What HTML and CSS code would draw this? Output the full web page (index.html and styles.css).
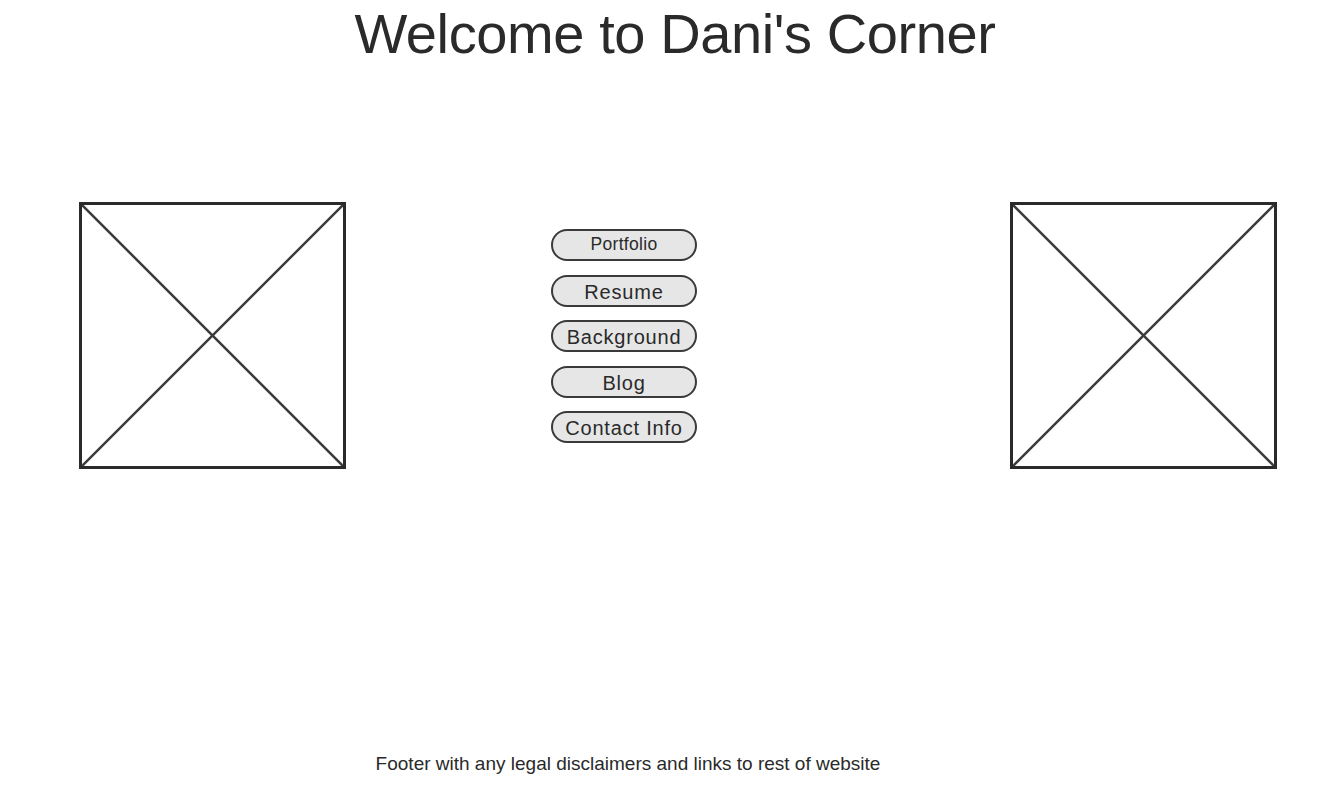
FILE: index.html
```html
<!DOCTYPE html>
<html>
<head>
<meta charset="utf-8">
<link rel="stylesheet" href="styles.css">
</head>
<body>
<h1 class="title">Welcome to Dani's Corner</h1>
<main class="row">
  <div class="ph">
    <svg viewBox="0 0 261 261" preserveAspectRatio="none"><line x1="0" y1="0" x2="261" y2="261"/><line x1="261" y1="0" x2="0" y2="261"/></svg>
  </div>
  <nav class="nav">
    <a class="btn small">Portfolio</a>
    <a class="btn">Resume</a>
    <a class="btn">Background</a>
    <a class="btn">Blog</a>
    <a class="btn">Contact Info</a>
  </nav>
  <div class="ph">
    <svg viewBox="0 0 261 261" preserveAspectRatio="none"><line x1="0" y1="0" x2="261" y2="261"/><line x1="261" y1="0" x2="0" y2="261"/></svg>
  </div>
</main>
<footer class="footer">Footer with any legal disclaimers and links to rest of website</footer>
</body>
</html>
```

FILE: styles.css
```css
html, body {
  margin: 0;
  padding: 0;
  background: #fff;
}
body {
  width: 1330px;
  height: 797px;
  font-family: "Liberation Sans", Arial, sans-serif;
  color: #2a2a2a;
  overflow: hidden;
}
.title {
  margin: 0;
  padding: 2px 0 0 20px;
  text-align: center;
  font-size: 56px;
  letter-spacing: -0.4px;
  font-weight: normal;
  line-height: 64px;
}
.row {
  display: flex;
  align-items: flex-start;
  margin-top: 136px;
  padding-left: 79px;
}
.ph {
  width: 261px;
  height: 261px;
  border: 3px solid #2a2a2a;
  flex: none;
}
.ph svg {
  display: block;
  width: 100%;
  height: 100%;
}
.ph line {
  stroke: #3a3a3a;
  stroke-width: 2.5;
}
.nav {
  display: flex;
  flex-direction: column;
  gap: 13.5px;
  width: 146px;
  margin: 27px 313px 0 205px;
}
.btn {
  box-sizing: border-box;
  height: 32px;
  border: 2.5px solid #3a3a3a;
  border-radius: 16px;
  background: #e6e6e6;
  text-align: center;
  font-size: 20px;
  letter-spacing: 0.8px;
  line-height: 27px;
  padding-top: 2px;
  color: #2a2a2a;
  white-space: nowrap;
}
.btn.small {
  font-size: 17.5px;
  letter-spacing: 0.3px;
  padding-top: 0;
}
.footer {
  margin-top: 284px;
  padding-right: 74px;
  text-align: center;
  font-size: 19px;
  line-height: 22px;
}
```
